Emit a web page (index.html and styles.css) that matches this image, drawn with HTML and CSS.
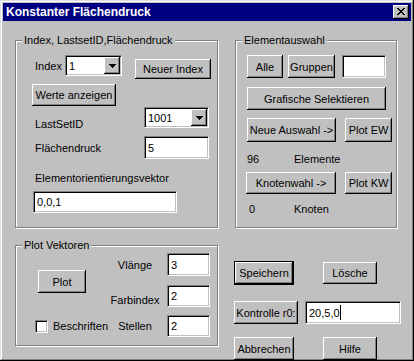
FILE: index.html
```html
<!DOCTYPE html>
<html lang="de">
<head>
    <meta charset="UTF-8">
    <meta name="viewport" content="width=device-width, initial-scale=1.0">
    <title>Konstanter Flächendruck</title>
    <link rel="stylesheet" href="styles.css">
</head>
<body>
    <div class="window">
        <div class="titlebar">
            <span class="title">Konstanter Flächendruck</span>
            <button class="close-btn">
                <svg width="8" height="7" viewBox="0 0 8 7"><path d="M0 0h2v1H0zM6 0h2v1H6zM1 1h2v1H1zM5 1h2v1H5zM2 2h4v1H2zM3 3h2v1H3zM2 4h4v1H2zM1 5h2v1H1zM5 5h2v1H5zM0 6h2v1H0zM6 6h2v1H6z"/></svg>
            </button>
        </div>

        <div class="content">
            <div class="top-row">
                <!-- Index / LastSetID / Flaechendruck -->
                <div class="group group-index">
                    <span class="legend">Index, LastsetID,Flächendruck</span>

                    <div class="row row-index">
                        <span class="label lbl-index">Index</span>
                        <div class="field combo combo-index">
                            <span class="field-text">1</span>
                            <span class="combo-btn"><svg width="7" height="4" viewBox="0 0 7 4"><path d="M0 0h7v1H0zM1 1h5v1H1zM2 2h3v1H2zM3 3h1v1H3z"/></svg></span>
                        </div>
                        <button class="btn btn-neuer">Neuer Index</button>
                    </div>

                    <div class="row row-werte">
                        <button class="btn btn-werte">Werte anzeigen</button>
                    </div>

                    <div class="row row-lastset">
                        <span class="label lbl-lastset">LastSetID</span>
                        <div class="field combo combo-lastset">
                            <span class="field-text">1001</span>
                            <span class="combo-btn"><svg width="7" height="4" viewBox="0 0 7 4"><path d="M0 0h7v1H0zM1 1h5v1H1zM2 2h3v1H2zM3 3h1v1H3z"/></svg></span>
                        </div>
                    </div>

                    <div class="row row-flaeche">
                        <span class="label lbl-flaeche">Flächendruck</span>
                        <div class="field field-flaeche"><span class="field-text">5</span></div>
                    </div>

                    <div class="label lbl-vektor">Elementorientierungsvektor</div>

                    <div class="row row-vektor">
                        <div class="field field-vektor"><span class="field-text">0,0,1</span></div>
                    </div>
                </div>

                <!-- Elementauswahl -->
                <div class="group group-auswahl">
                    <span class="legend">Elementauswahl</span>

                    <div class="row row-alle">
                        <button class="btn btn-alle">Alle</button>
                        <button class="btn btn-gruppen">Gruppen</button>
                        <div class="field field-gruppen"></div>
                    </div>

                    <div class="row row-grafisch">
                        <button class="btn btn-grafisch">Grafische Selektieren</button>
                    </div>

                    <div class="row row-neue">
                        <button class="btn btn-neue">Neue Auswahl -&gt;</button>
                        <button class="btn btn-plot-ew">Plot EW</button>
                    </div>

                    <div class="row count-row count-elemente">
                        <span class="count">96</span>
                        <span class="label">Elemente</span>
                    </div>

                    <div class="row row-knoten">
                        <button class="btn btn-knoten">Knotenwahl -&gt;</button>
                        <button class="btn btn-plot-kw">Plot KW</button>
                    </div>

                    <div class="row count-row count-knoten">
                        <span class="count">0</span>
                        <span class="label">Knoten</span>
                    </div>
                </div>
            </div>

            <div class="bottom-row">
                <!-- Plot Vektoren -->
                <div class="group group-plot">
                    <span class="legend">Plot Vektoren</span>
                    <div class="plot-grid">
                        <button class="btn btn-plot">Plot</button>
                        <span class="label plot-label lbl-vlaenge">Vlänge</span>
                        <div class="field field-small row1"><span class="field-text">3</span></div>
                        <span class="label plot-label lbl-farb">Farbindex</span>
                        <div class="field field-small row2"><span class="field-text">2</span></div>
                        <label class="check">
                            <span class="check-box"></span>
                            <span class="label">Beschriften</span>
                        </label>
                        <span class="label plot-label lbl-stellen">Stellen</span>
                        <div class="field field-small row3"><span class="field-text">2</span></div>
                    </div>
                </div>

                <!-- Aktionen -->
                <div class="actions">
                    <div class="row row-speichern">
                        <button class="btn btn-default btn-speichern">Speichern</button>
                        <button class="btn btn-loesche">Lösche</button>
                    </div>
                    <div class="row row-kontrolle">
                        <button class="btn btn-kontrolle">Kontrolle r0:</button>
                        <div class="field field-kontrolle"><span class="field-text">20,5,0</span><span class="caret"></span></div>
                    </div>
                    <div class="row row-abbrechen">
                        <button class="btn btn-abbrechen">Abbrechen</button>
                        <button class="btn btn-hilfe">Hilfe</button>
                    </div>
                </div>
            </div>
        </div>
    </div>
</body>
</html>
```

FILE: styles.css
```css
body {
    margin: 0;
    font-family: "Liberation Sans", Arial, sans-serif;
    font-size: 11px;
    color: #000;
    background-color: #c0c0c0;
}

.window {
    width: 414px;
    height: 361px;
    box-sizing: border-box;
    padding: 3px;
    background-color: #c0c0c0;
    box-shadow: inset -1px -1px #000, inset 1px 1px #dfdfdf, inset -2px -2px #808080, inset 2px 2px #fff;
}

/* title bar */
.titlebar {
    height: 18px;
    background-color: #000080;
    display: flex;
    align-items: center;
    justify-content: space-between;
}

.title {
    color: #fff;
    font-weight: bold;
    font-size: 12px;
    padding-left: 3px;
}

.close-btn {
    width: 16px;
    height: 14px;
    margin-right: 2px;
    padding: 0;
    border: none;
    background-color: #c0c0c0;
    box-shadow: inset -1px -1px #000, inset 1px 1px #fff, inset -2px -2px #808080;
    display: flex;
    align-items: center;
    justify-content: center;
}

.close-btn svg {
    margin-left: -1px;
    margin-top: -1px;
}

.content {
    padding: 19px 0 0 12px;
}

.top-row,
.bottom-row {
    display: flex;
    align-items: flex-start;
}

.bottom-row {
    margin-top: 17px;
}

/* etched group boxes */
.group {
    position: relative;
    box-sizing: border-box;
    border: 1px solid #808080;
    box-shadow: inset 1px 1px #fff, 1px 1px #fff;
}

.legend {
    position: absolute;
    top: -8px;
    left: 6px;
    padding: 0 2px;
    line-height: 14px;
    background-color: #c0c0c0;
    white-space: nowrap;
}

.group-index {
    width: 203px;
    height: 188px;
}

.group-auswahl {
    width: 162px;
    height: 188px;
    margin-left: 17px;
}

.group-plot {
    width: 203px;
    height: 101px;
}

.row {
    display: flex;
    align-items: flex-start;
}

.label {
    white-space: nowrap;
    line-height: 14px;
}

/* buttons */
.btn {
    box-sizing: border-box;
    height: 23px;
    padding: 0;
    border: none;
    background-color: #c0c0c0;
    font-family: inherit;
    font-size: 11px;
    color: #000;
    box-shadow: inset -1px -1px #000, inset 1px 1px #fff, inset -2px -2px #808080;
    white-space: nowrap;
}

.btn-default {
    border: 1px solid #000;
}

/* sunken fields */
.field {
    position: relative;
    box-sizing: border-box;
    height: 23px;
    background-color: #fff;
    border: 1px solid;
    border-color: #808080 #fff #fff #808080;
    box-shadow: inset 1px 1px #000, inset -1px -1px #c0c0c0;
    display: flex;
    align-items: center;
}

.field-text {
    padding-left: 3px;
    line-height: 14px;
}

.combo {
    height: 21px;
    justify-content: space-between;
}

.combo-btn {
    width: 16px;
    height: 17px;
    margin-right: 1px;
    background-color: #c0c0c0;
    box-shadow: inset -1px -1px #000, inset 1px 1px #fff, inset -2px -2px #808080;
    display: flex;
    align-items: center;
    justify-content: center;
}

.combo-btn svg {
    margin-top: 1px;
}

/* index group */
.row-index {
    margin-top: 14px;
    height: 21px;
}

.lbl-index {
    margin-left: 19px;
    width: 30px;
    line-height: 21px;
    padding-top: 1px;
}

.combo-index {
    width: 57px;
}

.btn-neuer {
    margin-left: 13px;
    margin-top: 4px;
    width: 76px;
    height: 20px;
}

.row-werte {
    margin-top: 8px;
}

.btn-werte {
    margin-left: 16px;
    width: 84px;
    height: 22px;
}

.row-lastset {
    margin-top: 1px;
}

.lbl-lastset {
    margin-left: 19px;
    margin-top: 10px;
    width: 109px;
}

.combo-lastset {
    width: 65px;
}

.row-flaeche {
    margin-top: 5px;
    align-items: center;
}

.lbl-flaeche {
    margin-left: 19px;
    width: 109px;
    padding-top: 1px;
}

.field-flaeche {
    width: 65px;
}

.lbl-vektor {
    margin-top: 12px;
    margin-left: 19px;
}

.row-vektor {
    margin-top: 6px;
}

.field-vektor {
    margin-left: 17px;
    width: 144px;
    height: 22px;
}

/* auswahl group */
.row-alle {
    margin-top: 14px;
}

.btn-alle {
    margin-left: 11px;
    width: 36px;
}

.btn-gruppen {
    margin-left: 5px;
    width: 47px;
}

.field-gruppen {
    margin-left: 7px;
    width: 44px;
}

.row-grafisch {
    margin-top: 9px;
}

.btn-grafisch {
    margin-left: 11px;
    width: 139px;
}

.row-neue {
    margin-top: 8px;
}

.btn-neue {
    margin-left: 11px;
    width: 89px;
    height: 24px;
}

.btn-plot-ew,
.btn-plot-kw {
    margin-left: 9px;
    width: 47px;
    height: 24px;
}

.count-elemente {
    margin-top: 10px;
}

.count {
    line-height: 14px;
}

.count-elemente .count {
    margin-left: 11px;
    width: 47px;
}

.row-knoten {
    margin-top: 6px;
}

.btn-knoten {
    margin-left: 10px;
    width: 90px;
    height: 22px;
}

.btn-plot-kw {
    margin-left: 9px;
    height: 22px;
}

.count-knoten {
    margin-top: 8px;
}

.count-knoten .count {
    margin-left: 13px;
    width: 45px;
}

/* plot group */
.plot-grid {
    display: grid;
    grid-template-columns: 96px 46px 52px;
    grid-template-rows: 23px 23px 22px;
    row-gap: 8px;
    padding-top: 7px;
}

.btn-plot {
    grid-column: 1;
    grid-row: 1 / 3;
    align-self: center;
    margin-left: 22px;
    margin-top: 3px;
    width: 48px;
}

.plot-label {
    grid-column: 2;
    justify-self: center;
}

.lbl-vlaenge {
    grid-row: 1;
    align-self: center;
}

.lbl-farb {
    grid-row: 2;
    align-self: end;
}

.lbl-stellen {
    grid-row: 3;
    align-self: center;
}

.field-small {
    grid-column: 3;
    justify-self: end;
    width: 43px;
}

.field-small.row1 {
    grid-row: 1;
}

.field-small.row2 {
    grid-row: 2;
    align-self: end;
    height: 22px;
}

.field-small.row3 {
    grid-row: 3;
    height: 22px;
}

.check {
    grid-column: 1;
    grid-row: 3;
    display: flex;
    align-items: center;
}

.check-box {
    box-sizing: border-box;
    width: 13px;
    height: 13px;
    margin-left: 19px;
    background-color: #fff;
    border: 1px solid;
    border-color: #808080 #fff #fff #808080;
    box-shadow: inset 1px 1px #000, inset -1px -1px #c0c0c0;
}

.check .label {
    margin-left: 5px;
}

/* right side buttons */
.actions {
    margin-left: 16px;
}

.row-speichern {
    margin-top: 16px;
}

.btn-speichern {
    width: 60px;
    height: 24px;
}

.btn-loesche {
    margin-left: 29px;
    margin-top: 1px;
    width: 54px;
    height: 22px;
}

.row-kontrolle {
    margin-top: 16px;
}

.btn-kontrolle {
    width: 64px;
}

.field-kontrolle {
    margin-left: 7px;
    width: 96px;
}

.caret {
    width: 1px;
    height: 15px;
    background-color: #000;
}

.row-abbrechen {
    margin-top: 13px;
}

.btn-abbrechen {
    width: 60px;
}

.btn-hilfe {
    margin-left: 29px;
    width: 54px;
}
```
